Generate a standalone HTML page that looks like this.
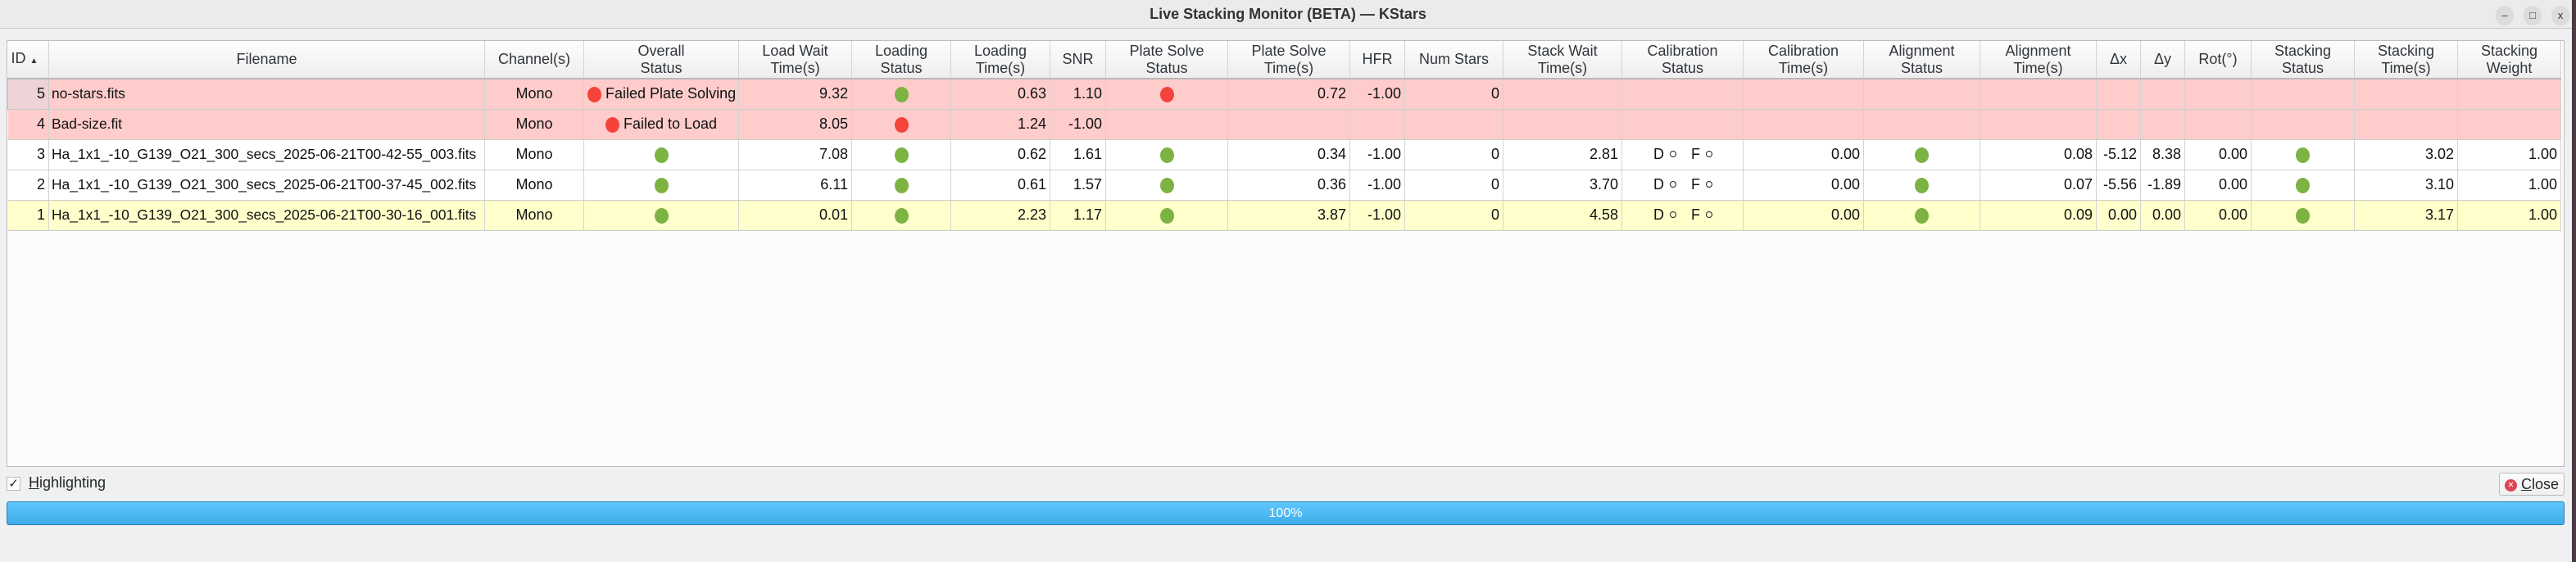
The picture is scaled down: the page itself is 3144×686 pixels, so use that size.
<!DOCTYPE html>
<html><head><meta charset="utf-8"><style>
*{box-sizing:border-box;margin:0;padding:0}
body{width:3144px;height:686px;background:#eff0f1;font-family:"Liberation Sans","DejaVu Sans",sans-serif;position:relative;overflow:hidden;color:#232627}
#tb{position:absolute;left:0;top:0;width:3144px;height:35px;background:#ebebeb;border-bottom:1px solid #c8c8c8}
#tb .t{position:absolute;left:0;right:0;top:7px;text-align:center;font-weight:bold;font-size:18px;color:#333}
.wb{position:absolute;top:7px;width:22px;height:24px;border-radius:11px;background:#dcdcdc;font-size:13px;text-align:center;line-height:24px;color:#333}
#frame{position:absolute;left:8px;top:49px;width:3122px;height:521px;background:#fcfcfc;border:1px solid #bdbdbd}
table{position:absolute;left:0;top:0;width:3116px;border-collapse:collapse;table-layout:fixed;font-size:18px}
th{height:46px;font-weight:normal;line-height:21px;background:linear-gradient(#fdfdfd,#eeeeee);border-right:1px solid #d4d4d4;border-bottom:2px solid #b8b8b8;text-align:center;color:#31363b;overflow:hidden;white-space:nowrap}
td{height:37px;border-right:1px solid #d4d4d4;border-bottom:1px solid #cdcdcd;text-align:right;padding:0 4px;white-space:nowrap;overflow:hidden;color:#111}
td.c{text-align:center}td.l{text-align:left;padding-left:4px}
td.f{font-size:17.4px;padding-left:3px;padding-right:0}
tr.p td{background:#ffcccc}tr.y td{background:#ffffcc}tr.w td{background:#fff}
.g,.r{display:inline-block;width:17px;height:19px;border-radius:50%;vertical-align:middle}
.g{background:#7cb342}.r{background:#f4433a}
.o{display:inline-block;width:8px;height:8px;border:1.5px solid #222;border-radius:50%;margin:0 18px 3px 7px;vertical-align:middle}
</style></head><body>
<div id="tb"><div class="t">Live Stacking Monitor (BETA) — KStars</div>
<div class="wb" style="left:3046px">–</div><div class="wb" style="left:3080px">□</div><div class="wb" style="left:3114px">x</div></div>
<div id="frame">
<table>
<colgroup><col style="width:50px"><col style="width:532px"><col style="width:121px"><col style="width:189px"><col style="width:138px"><col style="width:121px"><col style="width:121px"><col style="width:68px"><col style="width:149px"><col style="width:149px"><col style="width:67px"><col style="width:120px"><col style="width:145px"><col style="width:148px"><col style="width:147px"><col style="width:142px"><col style="width:142px"><col style="width:54px"><col style="width:54px"><col style="width:81px"><col style="width:126px"><col style="width:126px"><col style="width:126px"></colgroup>
<tr><th style="text-align:left;padding-left:4px">ID <span style="font-size:10px">▲</span></th><th>Filename</th><th>Channel(s)</th><th>Overall<br>Status</th><th>Load Wait<br>Time(s)</th><th>Loading<br>Status</th><th>Loading<br>Time(s)</th><th>SNR</th><th>Plate Solve<br>Status</th><th>Plate Solve<br>Time(s)</th><th>HFR</th><th>Num Stars</th><th>Stack Wait<br>Time(s)</th><th>Calibration<br>Status</th><th>Calibration<br>Time(s)</th><th>Alignment<br>Status</th><th>Alignment<br>Time(s)</th><th>Δx</th><th>Δy</th><th>Rot(°)</th><th>Stacking<br>Status</th><th>Stacking<br>Time(s)</th><th>Stacking<br>Weight</th></tr>
<tr class="p"><td style="background:#eed3d8;border:1px solid #c8c8c8">5</td><td class="l f">no-stars.fits</td><td class="c">Mono</td><td class="c"><span class="r"></span> Failed Plate Solving</td><td>9.32</td><td class="c"><span class="g"></span></td><td>0.63</td><td>1.10</td><td class="c"><span class="r"></span></td><td>0.72</td><td>-1.00</td><td>0</td><td></td><td></td><td></td><td></td><td></td><td></td><td></td><td></td><td></td><td></td><td></td></tr>
<tr class="p"><td>4</td><td class="l f">Bad-size.fit</td><td class="c">Mono</td><td class="c"><span class="r"></span> Failed to Load</td><td>8.05</td><td class="c"><span class="r"></span></td><td>1.24</td><td>-1.00</td><td></td><td></td><td></td><td></td><td></td><td></td><td></td><td></td><td></td><td></td><td></td><td></td><td></td><td></td><td></td></tr>
<tr class="w"><td>3</td><td class="l f">Ha_1x1_-10_G139_O21_300_secs_2025-06-21T00-42-55_003.fits</td><td class="c">Mono</td><td class="c"><span class="g"></span></td><td>7.08</td><td class="c"><span class="g"></span></td><td>0.62</td><td>1.61</td><td class="c"><span class="g"></span></td><td>0.34</td><td>-1.00</td><td>0</td><td>2.81</td><td class="l" style="padding-left:38px">D<span class="o"></span>F<span class="o"></span></td><td>0.00</td><td class="c"><span class="g"></span></td><td>0.08</td><td>-5.12</td><td>8.38</td><td>0.00</td><td class="c"><span class="g"></span></td><td>3.02</td><td>1.00</td></tr>
<tr class="w"><td>2</td><td class="l f">Ha_1x1_-10_G139_O21_300_secs_2025-06-21T00-37-45_002.fits</td><td class="c">Mono</td><td class="c"><span class="g"></span></td><td>6.11</td><td class="c"><span class="g"></span></td><td>0.61</td><td>1.57</td><td class="c"><span class="g"></span></td><td>0.36</td><td>-1.00</td><td>0</td><td>3.70</td><td class="l" style="padding-left:38px">D<span class="o"></span>F<span class="o"></span></td><td>0.00</td><td class="c"><span class="g"></span></td><td>0.07</td><td>-5.56</td><td>-1.89</td><td>0.00</td><td class="c"><span class="g"></span></td><td>3.10</td><td>1.00</td></tr>
<tr class="y"><td>1</td><td class="l f">Ha_1x1_-10_G139_O21_300_secs_2025-06-21T00-30-16_001.fits</td><td class="c">Mono</td><td class="c"><span class="g"></span></td><td>0.01</td><td class="c"><span class="g"></span></td><td>2.23</td><td>1.17</td><td class="c"><span class="g"></span></td><td>3.87</td><td>-1.00</td><td>0</td><td>4.58</td><td class="l" style="padding-left:38px">D<span class="o"></span>F<span class="o"></span></td><td>0.00</td><td class="c"><span class="g"></span></td><td>0.09</td><td>0.00</td><td>0.00</td><td>0.00</td><td class="c"><span class="g"></span></td><td>3.17</td><td>1.00</td></tr>
</table>
</div>
<div style="position:absolute;left:8px;top:582px;width:17px;height:17px;border:1px solid #bbb;background:#fcfcfc;font-size:15px;line-height:15px;text-align:center">✓</div>
<div style="position:absolute;left:35px;top:579px;font-size:18px"><u>H</u>ighlighting</div>
<div style="position:absolute;left:3050px;top:577px;width:80px;height:28px;border:1px solid #bbb;border-radius:3px;background:linear-gradient(#fcfcfc,#f0f0f0);font-size:18px;line-height:26px;padding-left:6px;white-space:nowrap"><span style="display:inline-block;width:15px;height:15px;border-radius:50%;background:#da4453;color:#fff;font-size:10px;line-height:15px;text-align:center;vertical-align:middle">✕</span> <u>C</u>lose</div>
<div style="position:absolute;left:8px;top:612px;width:3122px;height:29px;border:1px solid #2d7fb0;border-radius:3px;background:linear-gradient(#5ec7fd,#3fadea);color:#fff;text-align:center;font-size:16px;line-height:27px">100%</div>
<div style="position:absolute;left:3139px;top:0;width:5px;height:686px;background:#4a3a44"></div>
</body></html>
